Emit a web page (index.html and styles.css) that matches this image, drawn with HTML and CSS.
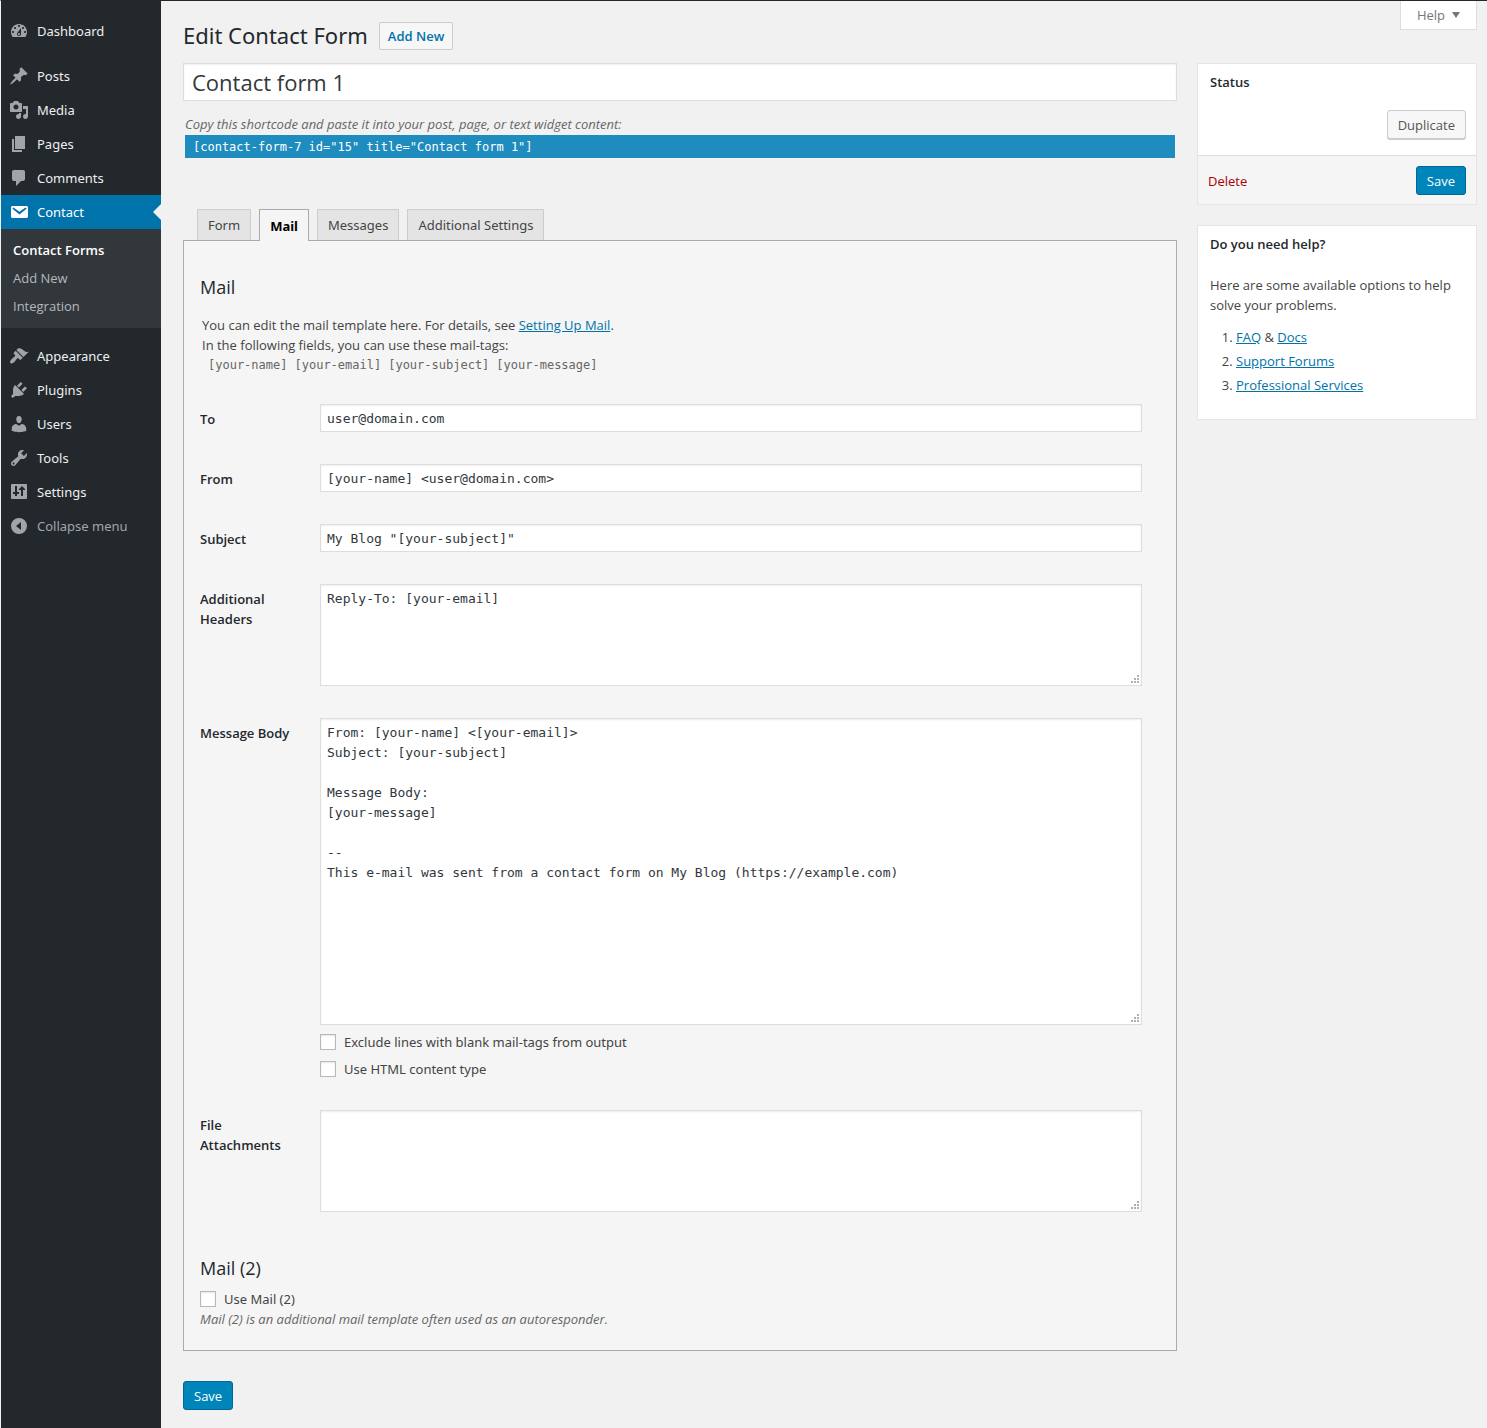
FILE: index.html
```html
<!DOCTYPE html>
<html lang="en">
<head>
    <meta charset="UTF-8">
    <title>Edit Contact Form</title>
    <link rel="stylesheet" href="styles.css">
</head>
<body>
<div class="wrapper">
    <nav class="admin-menu" aria-label="Main menu">
        <ul class="menu">
            <li><a href="#"><svg viewBox="0 0 20 20"><path fill-rule="evenodd" d="M3.76 16h12.48c1.1-1.37 1.76-3.11 1.76-5 0-4.42-3.58-8-8-8s-8 3.58-8 8c0 1.89.66 3.63 1.76 5zM10 4c.55 0 1 .45 1 1s-.45 1-1 1-1-.45-1-1 .45-1 1-1zM6 6c.55 0 1 .45 1 1s-.45 1-1 1-1-.45-1-1 .45-1 1-1zm8 0c.55 0 1 .45 1 1s-.45 1-1 1-1-.45-1-1 .45-1 1-1zm-5.37 5.55L12 7v6c0 1.1-.9 2-2 2s-2-.9-2-2c0-.57.24-1.08.63-1.45zM4 10c.55 0 1 .45 1 1s-.45 1-1 1-1-.45-1-1 .45-1 1-1zm12 0c.55 0 1 .45 1 1s-.45 1-1 1-1-.45-1-1 .45-1 1-1zm-5 3c0-.55-.45-1-1-1s-1 .45-1 1 .45 1 1 1 1-.45 1-1z"/></svg>Dashboard</a></li>
            <li class="separator"></li>
            <li><a href="#"><svg viewBox="0 0 20 20"><path d="M10.44 3.02l1.82-1.82 6.36 6.35-1.83 1.82c-1.05-.68-2.48-.57-3.41.36l-.75.75c-.92.93-1.04 2.35-.35 3.41l-1.83 1.82-2.41-2.41-2.8 2.79c-.42.42-3.38 2.71-3.8 2.29s1.86-3.39 2.28-3.81l2.79-2.79L4.1 9.36l1.83-1.82c1.05.69 2.48.57 3.4-.36l.75-.75c.93-.92 1.05-2.35.36-3.41z"/></svg>Posts</a></li>
            <li><a href="#"><svg viewBox="0 0 20 20"><path fill-rule="evenodd" d="M13 11V4c0-.55-.45-1-1-1h-1.67L9 1H5L3.67 3H2c-.55 0-1 .45-1 1v7c0 .55.45 1 1 1h10c.55 0 1-.45 1-1zM7 4.5c1.38 0 2.5 1.12 2.5 2.5S8.38 9.5 7 9.5 4.5 8.38 4.5 7 5.62 4.5 7 4.5zM14 6h5v10.5c0 1.38-1.12 2.5-2.5 2.5S14 17.88 14 16.5s1.12-2.5 2.5-2.5c.17 0 .34.02.5.05V9h-3V6zm-4 8.05V13h2v3.5c0 1.38-1.12 2.5-2.5 2.5S7 17.88 7 16.5 8.12 14 9.5 14c.17 0 .34.02.5.05z"/></svg>Media</a></li>
            <li><a href="#"><svg viewBox="0 0 20 20"><path d="M6 15V2h10v13H6zm-1 1h8v2H3V5h2v11z"/></svg>Pages</a></li>
            <li><a href="#"><svg viewBox="0 0 20 20"><path d="M5 2h9c1.1 0 2 .9 2 2v7c0 1.1-.9 2-2 2h-2l-5 5v-5H5c-1.1 0-2-.9-2-2V4c0-1.1.9-2 2-2z"/></svg>Comments</a></li>
            <li class="current"><a href="#"><svg viewBox="0 0 20 20"><path d="M3.87 4h13.25C18.37 4 19 4.59 19 5.79v8.42c0 1.19-.63 1.79-1.88 1.79H3.87c-1.25 0-1.88-.6-1.88-1.79V5.79c0-1.2.63-1.79 1.88-1.79zm6.62 8.6l6.74-5.53c.24-.2.43-.66.13-1.07-.29-.41-.82-.42-1.17-.17l-5.7 3.86L4.8 5.83c-.35-.25-.88-.24-1.17.17-.3.41-.11.87.13 1.07z"/></svg>Contact</a>
                <ul class="submenu">
                    <li><a class="active" href="#">Contact Forms</a></li>
                    <li><a href="#">Add New</a></li>
                    <li><a href="#">Integration</a></li>
                </ul>
            </li>
            <li class="separator"></li>
            <li><a href="#"><svg viewBox="0 0 20 20"><path d="M14.48 11.06L7.41 3.99l1.5-1.5c.5-.56 2.3-.47 3.51.32 1.21.8 1.43 1.28 2.91 2.1 1.18.64 2.45 1.26 4.45.85zm-.71.71L6.7 4.7 4.93 6.47c-.39.39-.39 1.02 0 1.41l1.06 1.06c.39.39.39 1.03 0 1.42-.6.6-1.43 1.11-2.21 1.69-.35.26-.7.53-1.01.84C1.43 14.23.4 16.08 1.4 17.07c.99 1 2.84-.03 4.18-1.36.31-.31.58-.66.85-1.02.57-.78 1.08-1.61 1.69-2.21.39-.39 1.02-.39 1.41 0l1.06 1.06c.39.39 1.02.39 1.41 0z"/></svg>Appearance</a></li>
            <li><a href="#"><svg viewBox="0 0 20 20"><path d="M13.11 4.36L9.87 7.6 8 5.73l3.24-3.24c.35-.34 1.05-.2 1.56.32.52.51.66 1.21.31 1.55zm-8 1.77l.91-1.12 9.01 9.01-1.19.84c-.71.71-2.63 1.16-3.82 1.16H6.14L4.9 17.26c-.59.59-1.54.59-2.12 0-.59-.58-.59-1.53 0-2.12l1.24-1.24v-3.88c0-1.13.4-3.19 1.09-3.89zm7.26 3.97l3.24-3.24c.34-.35 1.04-.21 1.55.31.52.51.66 1.21.31 1.55l-3.24 3.25z"/></svg>Plugins</a></li>
            <li><a href="#"><svg viewBox="0 0 20 20"><path d="M10 9.25c-2.27 0-2.73-3.44-2.73-3.44C7 4.02 7.82 2 9.97 2c2.16 0 2.98 2.02 2.71 3.81 0 0-.41 3.44-2.68 3.44zm0 2.57L12.72 10c2.39 0 4.52 2.33 4.52 4.53v2.49s-3.65 1.13-7.24 1.13c-3.65 0-7.24-1.13-7.24-1.13v-2.49c0-2.25 1.94-4.48 4.47-4.48z"/></svg>Users</a></li>
            <li><a href="#"><svg viewBox="0 0 20 20"><path fill-rule="evenodd" d="M16.68 9.77c-1.34 1.34-3.3 1.67-4.95.99l-5.41 6.52c-.99.99-2.59.99-3.58 0s-.99-2.59 0-3.57l6.52-5.42c-.68-1.65-.35-3.61.99-4.95 1.28-1.28 3.12-1.62 4.72-1.06l-2.89 2.89 2.82 2.82 2.86-2.87c.53 1.58.18 3.39-1.08 4.65zM3.81 16.21c.4.39 1.04.39 1.43 0 .4-.4.4-1.04 0-1.43-.39-.4-1.03-.4-1.43 0-.39.39-.39 1.03 0 1.43z"/></svg>Tools</a></li>
            <li><a href="#"><svg viewBox="0 0 20 20"><path fill-rule="evenodd" d="M3 2h14c.55 0 1 .45 1 1v13c0 .55-.45 1-1 1H3c-.55 0-1-.45-1-1V3c0-.55.45-1 1-1zM6 4v6H4v2h2v2h2v-2h2v-2H8V4zM13 4l-3 3v1h2v6h2V8h2V7z"/></svg>Settings</a></li>
            <li class="collapse"><button type="button"><svg viewBox="0 0 20 20"><path fill-rule="evenodd" d="M10 2a8 8 0 1 1 0 16 8 8 0 0 1 0-16zm2 4l-5 4 5 4z"/></svg>Collapse menu</button></li>
        </ul>
    </nav>

    <main class="content">
        <header class="page-header">
            <h1>Edit Contact Form</h1>
            <a class="title-action" href="#">Add New</a>
            <button type="button" class="help-tab">Help <span class="arrow"></span></button>
        </header>

        <form class="columns" action="#">
            <div class="main-column">
                <input type="text" class="form-title" aria-label="Form title" value="Contact form 1">
                <div class="shortcode">
                    <label for="shortcode">Copy this shortcode and paste it into your post, page, or text widget content:</label>
                    <input type="text" id="shortcode" readonly value='[contact-form-7 id="15" title="Contact form 1"]'>
                </div>

                <div class="tabs" role="tablist">
                    <button type="button" role="tab">Form</button>
                    <button type="button" role="tab" class="active" aria-selected="true">Mail</button>
                    <button type="button" role="tab">Messages</button>
                    <button type="button" role="tab">Additional Settings</button>
                </div>

                <section class="panel">
                    <h2>Mail</h2>
                    <div class="legend">
                        You can edit the mail template here. For details, see <a href="#">Setting Up Mail</a>.<br>
                        In the following fields, you can use these mail-tags:
                        <div class="mailtags"><code>[your-name]</code><code>[your-email]</code><code>[your-subject]</code><code>[your-message]</code></div>
                    </div>

                    <div class="fields">
                        <label for="to">To</label>
                        <input type="text" id="to" value="user@domain.com">

                        <label for="from">From</label>
                        <input type="text" id="from" value="[your-name] &lt;user@domain.com&gt;">

                        <label for="subject">Subject</label>
                        <input type="text" id="subject" value='My Blog "[your-subject]"'>

                        <label for="headers">Additional Headers</label>
                        <textarea id="headers" class="short">Reply-To: [your-email]</textarea>

                        <label for="body">Message Body</label>
                        <div>
                            <textarea id="body" class="tall">From: [your-name] &lt;[your-email]&gt;
Subject: [your-subject]

Message Body:
[your-message]

--
This e-mail was sent from a contact form on My Blog (https://example.com)</textarea>
                            <div class="options">
                                <label class="check"><input type="checkbox">Exclude lines with blank mail-tags from output</label>
                                <label class="check"><input type="checkbox">Use HTML content type</label>
                            </div>
                        </div>

                        <label for="attachments">File Attachments</label>
                        <textarea id="attachments" class="short"></textarea>
                    </div>

                    <h2 class="mail-two">Mail (2)</h2>
                    <label class="check"><input type="checkbox">Use Mail (2)</label>
                    <p class="description">Mail (2) is an additional mail template often used as an autoresponder.</p>
                </section>

                <button type="submit" class="button primary">Save</button>
            </div>

            <aside class="side-column">
                <section class="box">
                    <h3>Status</h3>
                    <div class="minor-actions">
                        <button type="button" class="button">Duplicate</button>
                    </div>
                    <div class="major-actions">
                        <a class="delete" href="#">Delete</a>
                        <button type="submit" class="button primary">Save</button>
                    </div>
                </section>

                <section class="box">
                    <h3>Do you need help?</h3>
                    <div class="inside">
                        <p>Here are some available options to help solve your problems.</p>
                        <ol>
                            <li><a href="#">FAQ</a> &amp; <a href="#">Docs</a></li>
                            <li><a href="#">Support Forums</a></li>
                            <li><a href="#">Professional Services</a></li>
                        </ol>
                    </div>
                </section>
            </aside>
        </form>
    </main>
</div>
</body>
</html>
```
FILE: styles.css
```css
*{
    box-sizing: border-box;
}
body{
    margin:0;
    background:#f1f1f1;
    color:#444;
    font-family:"Open Sans","Noto Sans",sans-serif;
    font-size:13px;
    line-height:20px;
}
h1, h2, h3, p, ul, ol{
    margin:0;
    padding:0;
}
h1, h2, h3{
    color:#23282d;
}
input, textarea, button{
    font-family:inherit;
    font-size:13px;
    color:#32373c;
}
button{
    cursor:pointer;
}
a{
    color:#0073aa;
}
.menu, .tabs, .check, .page-header h1{
    font-family:"Noto Sans","Open Sans",sans-serif;
}
.wrapper{
    display:flex;
    min-height:100vh;
    border-top:1px solid #23282d;
    border-left:1px solid #f1f1f1;
}

/* admin menu */
.admin-menu{
    flex:0 0 160px;
    background:#23282d;
    padding-top:13px;
}
.menu, .submenu{
    list-style:none;
}
.menu a, .collapse button{
    display:flex;
    align-items:center;
    height:34px;
    padding-left:8px;
    gap:8px;
    color:#eee;
    text-decoration:none;
}
.menu svg{
    width:20px;
    height:20px;
    fill:#a0a5aa;
}
.menu .separator{
    height:11px;
}
.menu .current > a{
    position:relative;
    background:#0073aa;
    color:#fff;
}
.menu .current > a::after{
    content:"";
    position:absolute;
    right:0;
    border:8px solid transparent;
    border-right-color:#f1f1f1;
}
.menu .current svg{
    fill:#fff;
}
.submenu{
    background:#32373c;
    padding:7px 0 8px;
    font-family:"Open Sans","Noto Sans",sans-serif;
}
.menu .submenu a{
    height:28px;
    padding-left:12px;
    color:#b4b9be;
}
.menu .submenu .active{
    color:#fff;
    font-weight:600;
}
.collapse button{
    width:100%;
    border:0;
    background:none;
    color:#a0a5aa;
}

/* header */
.content{
    flex:1;
    min-width:0;
    padding:0 10px 18px 22px;
}
.page-header{
    display:flex;
    align-items:flex-start;
    height:62px;
}
.page-header h1{
    font-size:22px;
    font-weight:400;
    line-height:30px;
    margin-top:19px;
}
.title-action{
    margin:21px 0 0 11px;
    padding:3px 8px;
    border:1px solid #ccc;
    border-radius:2px;
    background:#f7f7f7;
    font-weight:600;
    text-decoration:none;
}
.help-tab{
    display:flex;
    align-items:center;
    gap:7px;
    height:29px;
    margin-left:auto;
    padding:0 16px;
    border:1px solid #ddd;
    border-top:0;
    background:#fff;
    color:#72777c;
}
.arrow{
    border:4px solid transparent;
    border-top:6px solid #72777c;
    border-bottom:0;
}
.columns{
    display:flex;
    gap:20px;
}
.main-column{
    flex:1;
    min-width:0;
}
.side-column{
    flex:0 0 280px;
}

/* form title and shortcode */
.form-title, .fields input[type="text"], .fields textarea{
    display:block;
    width:100%;
    border:1px solid #ddd;
    background:#fff;
    box-shadow:inset 0 1px 2px rgba(0,0,0,.07);
}
.form-title{
    height:38px;
    padding:0 8px;
    font-size:22px;
}
.shortcode{
    margin:13px 2px 51px;
}
.shortcode label{
    display:block;
    margin-bottom:1px;
    color:#666;
    font-style:italic;
}
.shortcode input{
    display:block;
    width:100%;
    height:23px;
    padding:0 8px;
    border:0;
    background:#1e8cbe;
    color:#fff;
    font-family:"DejaVu Sans Mono",monospace;
    font-size:12px;
}

/* tabs */
.tabs{
    display:flex;
    gap:8px;
    padding-left:14px;
}
.tabs button{
    height:31px;
    padding:0 10px;
    border:1px solid #ccc;
    border-bottom:0;
    background:#e4e4e4;
    color:#444;
}
.tabs .active{
    height:32px;
    margin-bottom:-1px;
    border-color:#aaa;
    background:#f5f5f5;
    color:#000;
    font-weight:700;
    z-index:1;
}
.panel{
    margin-bottom:30px;
    padding:34px 34px 21px 16px;
    border:1px solid #aaa;
    background:#f5f5f5;
}
.panel h2{
    font-size:18px;
    font-weight:400;
    line-height:24px;
}
.legend{
    margin:16px 2px 29px;
}
.mailtags{
    display:flex;
    gap:7px;
    padding-left:6px;
}
.mailtags code{
    color:#666;
    font-family:"DejaVu Sans Mono",monospace;
    font-size:12px;
}
.fields{
    display:grid;
    grid-template-columns:100px 1fr;
    gap:32px 20px;
}
.fields > label{
    padding-top:5px;
    color:#23282d;
    font-weight:600;
}
.fields input[type="text"], .fields textarea{
    padding:0 6px;
    font-family:"DejaVu Sans Mono",monospace;
}
.fields input[type="text"]{
    height:28px;
}
.fields textarea{
    padding:4px 6px;
    line-height:20px;
    resize:vertical;
}
.fields .short{
    height:102px;
}
.fields .tall{
    height:307px;
}
textarea::-webkit-resizer{
    background:url("data:image/svg+xml,%3Csvg xmlns='http://www.w3.org/2000/svg' width='11' height='11' fill='%23b0b0b0'%3E%3Cpath d='M7 1h2v2H7zM4 4h2v2H4zM7 4h2v2H7zM1 7h2v2H1zM4 7h2v2H4zM7 7h2v2H7z'/%3E%3C/svg%3E") no-repeat right bottom;
}
.options{
    display:grid;
    gap:11px;
    margin:9px 0 1px;
}
.check{
    display:flex;
    align-items:center;
    gap:8px;
    line-height:16px;
}
.check input{
    appearance:none;
    width:16px;
    height:16px;
    margin:0;
    border:1px solid #b4b9be;
    background:#fff;
    box-shadow:inset 0 1px 2px rgba(0,0,0,.1);
}
.check input:checked{
    background:#1e8cbe;
}
.panel .mail-two{
    margin:44px 0 11px;
}
.description{
    margin-top:2px;
    color:#666;
    font-style:italic;
}

/* buttons */
.button{
    display:block;
    height:29px;
    padding:0 10px;
    border:1px solid #ccc;
    border-radius:3px;
    background:#f7f7f7;
    box-shadow:0 1px 0 #ccc;
    color:#555;
}
.button.primary{
    border-color:#006799;
    background:#0085ba;
    box-shadow:none;
    color:#fff;
}

/* sidebar boxes */
.box{
    margin-bottom:20px;
    border:1px solid #e5e5e5;
    background:#fff;
}
.box h3{
    padding:8px 12px;
    font-size:13px;
    font-weight:600;
}
.minor-actions{
    display:flex;
    justify-content:flex-end;
    padding:10px 10px 16px;
}
.major-actions{
    display:flex;
    align-items:center;
    justify-content:space-between;
    padding:10px 10px 9px;
    border-top:1px solid #ddd;
    background:#f5f5f5;
}
.delete{
    color:#a00;
    text-decoration:none;
}
.inside{
    padding:13px 12px 22px;
}
.inside ol{
    margin-top:10px;
    padding-left:26px;
}
.inside li{
    padding:2px 0;
}
```
